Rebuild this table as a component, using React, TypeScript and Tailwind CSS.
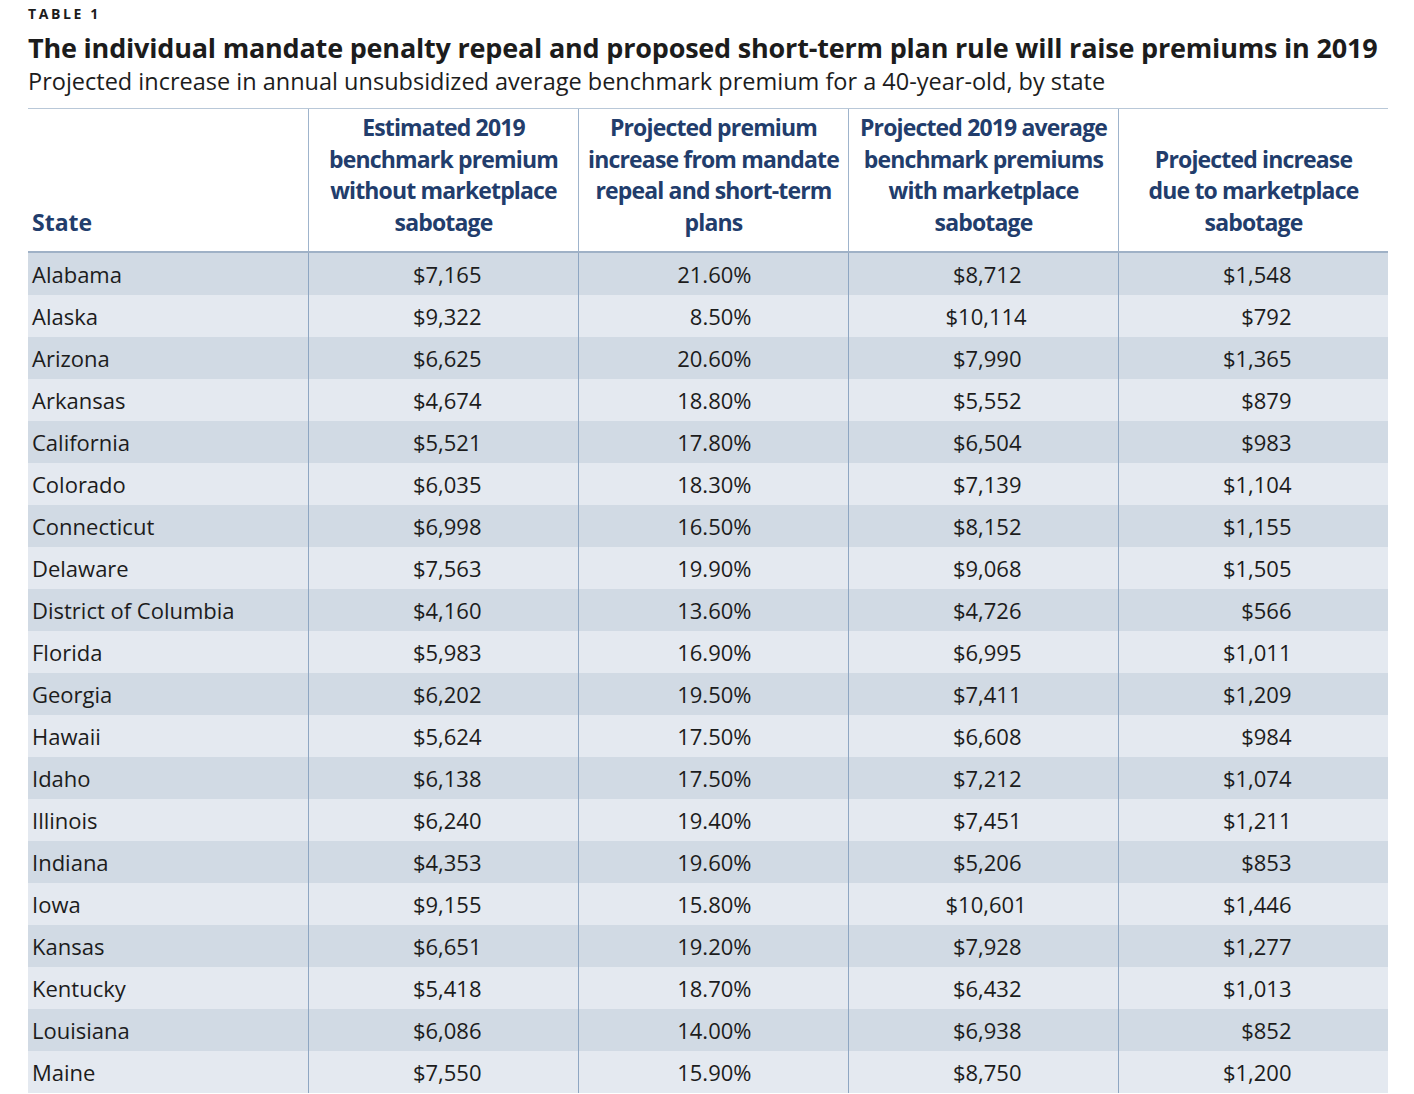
import React from "react";

const rows: [string, string, string, string, string][] = [
  ["Alabama", "$7,165", "21.60%", "$8,712", "$1,548"],
  ["Alaska", "$9,322", "8.50%", "$10,114", "$792"],
  ["Arizona", "$6,625", "20.60%", "$7,990", "$1,365"],
  ["Arkansas", "$4,674", "18.80%", "$5,552", "$879"],
  ["California", "$5,521", "17.80%", "$6,504", "$983"],
  ["Colorado", "$6,035", "18.30%", "$7,139", "$1,104"],
  ["Connecticut", "$6,998", "16.50%", "$8,152", "$1,155"],
  ["Delaware", "$7,563", "19.90%", "$9,068", "$1,505"],
  ["District of Columbia", "$4,160", "13.60%", "$4,726", "$566"],
  ["Florida", "$5,983", "16.90%", "$6,995", "$1,011"],
  ["Georgia", "$6,202", "19.50%", "$7,411", "$1,209"],
  ["Hawaii", "$5,624", "17.50%", "$6,608", "$984"],
  ["Idaho", "$6,138", "17.50%", "$7,212", "$1,074"],
  ["Illinois", "$6,240", "19.40%", "$7,451", "$1,211"],
  ["Indiana", "$4,353", "19.60%", "$5,206", "$853"],
  ["Iowa", "$9,155", "15.80%", "$10,601", "$1,446"],
  ["Kansas", "$6,651", "19.20%", "$7,928", "$1,277"],
  ["Kentucky", "$5,418", "18.70%", "$6,432", "$1,013"],
  ["Louisiana", "$6,086", "14.00%", "$6,938", "$852"],
  ["Maine", "$7,550", "15.90%", "$8,750", "$1,200"],
];

const headers = [
  ["Estimated 2019", "benchmark premium", "without marketplace", "sabotage"],
  ["Projected premium", "increase from mandate", "repeal and short-term", "plans"],
  ["Projected 2019 average", "benchmark premiums", "with marketplace", "sabotage"],
  ["Projected increase", "due to marketplace", "sabotage"],
];

export default function App() {
  return (
    <div className="w-[1414px] h-[1094px] overflow-hidden bg-white text-[#1c1c1c] [font-family:'Open_Sans',sans-serif]">
      <div className="pl-[28px] pt-[4px]">
        <div className="text-[14px] font-bold tracking-[2.6px] leading-[20px]">TABLE 1</div>
        <div className="text-[27px] font-bold leading-[34px] mt-[7px] tracking-[-0.2px] whitespace-nowrap">
          The individual mandate penalty repeal and proposed short-term plan rule will raise premiums in 2019
        </div>
        <div className="text-[23.5px] leading-[30px] mt-[1px] tracking-[0px] whitespace-nowrap">
          Projected increase in annual unsubsidized average benchmark premium for a 40-year-old, by state
        </div>
      </div>
      <div className="ml-[28px] mt-[12px] w-[1360px] border-t border-[#b9c8d8]">
        <div className="flex h-[144px] border-b-2 border-[#9fb1c6] text-[#223d6c] font-bold text-[23px] leading-[31.5px] tracking-[-0.85px]">
          <div className="w-[280px] flex items-end pl-[4px] pb-[13px] tracking-normal">State</div>
          {headers.map((h, i) => (
            <div key={i} className="w-[270px] border-l border-[#9fb4cc] flex flex-col justify-end items-center pb-[13px] text-center">
              {h.map((l, j) => (
                <div key={j} className="whitespace-nowrap">{l}</div>
              ))}
            </div>
          ))}
        </div>
        {rows.map((r, i) => (
          <div key={i} className={`flex h-[42px] text-[22px] ${i % 2 === 0 ? "bg-[#d1dae4]" : "bg-[#e4e9f0]"}`}>
            <div className="w-[280px] flex items-center pl-[4px] whitespace-nowrap">{r[0]}</div>
            {r.slice(1).map((v, j) => (
              <div key={j} className="w-[270px] border-l border-[#8ea6c2] flex items-center justify-center">
                <div className="w-[76px] text-right whitespace-nowrap">{v}</div>
              </div>
            ))}
          </div>
        ))}
      </div>
    </div>
  );
}
